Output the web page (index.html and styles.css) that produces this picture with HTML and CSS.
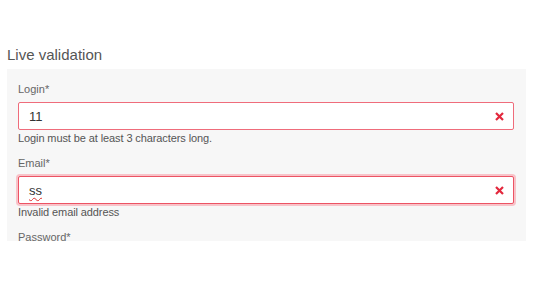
FILE: index.html
```html
<!DOCTYPE html>
<html>
<head>
<meta charset="utf-8">
<link rel="stylesheet" href="styles.css">
</head>
<body>
<h2 class="title">Live validation</h2>
<div class="panel">
  <div class="field">
    <label class="label">Login*</label>
    <div class="input invalid">
      <span class="value">11</span>
      <svg class="clear" width="9" height="9" viewBox="0 0 9 9"><path d="M1 1L8 8M8 1L1 8" stroke="#e3283d" stroke-width="2.2" stroke-linecap="butt"/></svg>
    </div>
    <div class="error">Login must be at least 3 characters long.</div>
  </div>
  <div class="field">
    <label class="label">Email*</label>
    <div class="input invalid focused">
      <span class="value"><span class="misspelled">ss</span></span>
      <svg class="clear" width="9" height="9" viewBox="0 0 9 9"><path d="M1 1L8 8M8 1L1 8" stroke="#e3283d" stroke-width="2.2" stroke-linecap="butt"/></svg>
    </div>
    <div class="error">Invalid email address</div>
  </div>
  <div class="field">
    <label class="label">Password*</label>
  </div>
</div>
</body>
</html>
```
FILE: styles.css
```css
html, body {
  margin: 0;
  padding: 0;
  background: #fff;
}
body {
  padding: 0 14px 0 7px;
  font-family: "Liberation Sans", Arial, sans-serif;
  color: #555;
}
.title {
  margin: 46px 0 5px;
  font-size: 15px;
  line-height: 18px;
  font-weight: normal;
  color: #555;
}
.panel {
  background: #f7f7f7;
  height: 172px;
  overflow: hidden;
  box-sizing: border-box;
  padding: 12px 12px 0 11px;
}
.field {
  margin-bottom: 9px;
}
.label {
  display: block;
  font-size: 11px;
  line-height: 16px;
  color: #666;
  margin-bottom: 5px;
}
.input {
  height: 28px;
  box-sizing: border-box;
  background: #fff;
  border: 1px solid #ccc;
  border-radius: 2px;
  display: flex;
  align-items: center;
  padding: 0 9px 0 10px;
}
.input.invalid {
  border-color: #ef6c7b;
}
.input.focused {
  border-color: #ec5364;
  box-shadow: 0 0 0 2px #f8c3c9;
}
.value {
  flex: 1;
  font-size: 13px;
  color: #333;
}
.misspelled {
  text-decoration: underline wavy #e03030;
  text-decoration-thickness: 1px;
  text-underline-offset: 2px;
}
.clear {
  display: block;
}
.error {
  font-size: 11px;
  line-height: 16px;
  color: #555;
  letter-spacing: -0.1px;
}
```
